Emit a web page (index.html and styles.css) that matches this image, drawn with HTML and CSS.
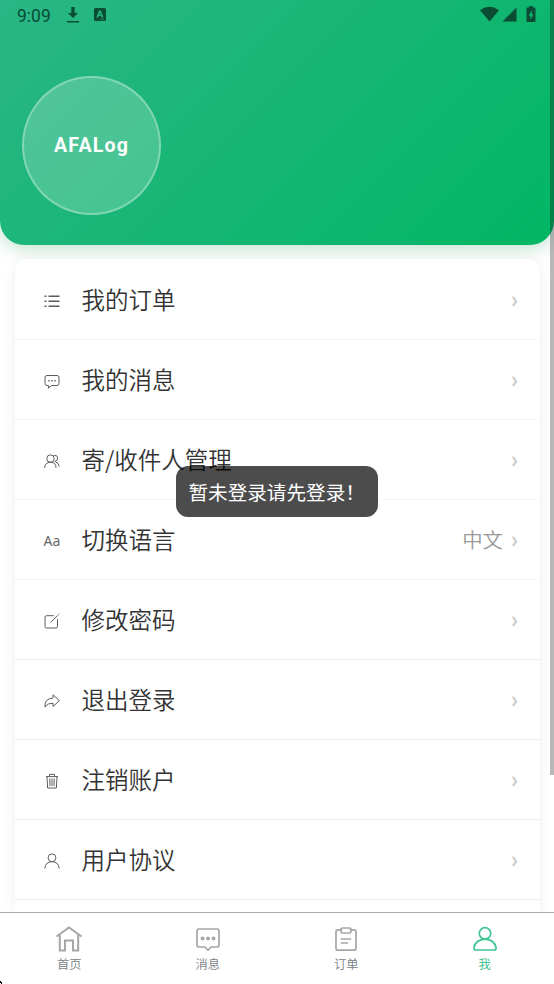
FILE: index.html
```html
<!DOCTYPE html>
<html lang="zh-CN">
<head>
<meta charset="utf-8">
<title>AFALog</title>
<link rel="stylesheet" href="styles.css">
</head>
<body>
<div class="screen">
  <header class="hero">
    <div class="status">
      <span class="time">9:09</span>
      <svg class="download" width="14" height="18" viewBox="0 0 14 18"><path d="M5.3 1h3.4v6H12l-5 5-5-5h3.300zM1 15h12v1.600H1z"/></svg>
      <svg class="app" width="12" height="13" viewBox="0 0 12 13"><path fill-rule="evenodd" d="M1.500 0h9Q12 0 12 1.500v10q0 1.500-1.500 1.500h-9Q0 13 0 11.500v-10Q0 0 1.500 0zM5 2.500 2.300 9.400h1.800l.5-1.400h2.500l.5 1.400h1.800L6.700 2.500zM5 6.700l.85-2.300.85 2.300zM6.300 10.800v.8h1.500v-.8zm2.200 0v.8H10v-.8z"/></svg>
      <svg class="signals" width="56" height="17" viewBox="0 0 56 17"><path d="M0 4.200Q9.500-2.600 19 4.200L9.600 15.500z"/><path d="M36.500 1.500v14H22.500z"/><path fill-rule="evenodd" d="M49 0h4v1.600h1.500Q55.500 1.600 55.500 2.600v12.400q0 1-1 1h-7q-1 0-1-1V2.600q0-1 1-1H49zM51.800 4.500 48.600 9.600h1.900v3.800l3-5.200h-1.700z"/></svg>
    </div>
    <div class="avatar">AFALog</div>
  </header>
  <main class="menu">
    <div class="row"><svg class="icon" viewBox="0 0 16 16"><path class="thick" d="M.5 3.200h2M4.500 3.200H15.500M.5 8.200h2M4.500 8.200H15.500M.5 13.200h2M4.500 13.200H15.500"/></svg><span class="label">我的订单</span><i class="arrow">›</i></div>
    <div class="row"><svg class="icon" viewBox="0 0 16 16"><path d="M3 2.500h10q2 0 2 2v6q0 2-2 2H7.700L4.500 15v-2.500H3q-2 0-2-2v-6q0-2 2-2z"/><path class="thick" d="M4.200 7.700h1.300M7.300 7.700h1.300M10.400 7.700h1.300"/></svg><span class="label">我的消息</span><i class="arrow">›</i></div>
    <div class="row"><svg class="icon" viewBox="0 0 16 16"><circle cx="6.500" cy="5.600" r="3.700"/><path d="M.6 14.800Q1 9.300 6.500 9.300T12 14.800M9.700 2.500q4-.7 4 2.500 0 2.600-2.800 3.500Q14.700 9.700 15.400 13.500"/></svg><span class="label">寄/收件人管理</span><i class="arrow">›</i></div>
    <div class="row"><span class="letters">Aa</span><span class="label">切换语言</span><span class="value">中文</span><i class="arrow">›</i></div>
    <div class="row strong"><svg class="icon" viewBox="0 0 16 16"><path d="M9.800 2.700H2.500Q1 2.700 1 4.200v9.300Q1 15 2.500 15H12q1.500 0 1.500-1.500V6.200M6.600 9.500l7.200-7.200M14.500 1.600l.9-.9"/></svg><span class="label">修改密码</span><i class="arrow">›</i></div>
    <div class="row strong"><svg class="icon" viewBox="0 0 16 16"><path d="M9 1.800l6.400 5.900L9 13.500V10.200Q4 9.800 .9 13.900.4 5.500 9 5z"/></svg><span class="label">退出登录</span><i class="arrow">›</i></div>
    <div class="row strong"><svg class="icon" viewBox="0 0 16 16"><path d="M2 3.600h12M5.500 3.500V1.300h5v2.200M3 3.800l.6 11.200h8.800L13 3.800M5.800 5.500l.2 7.500M8 5.500V13M10.200 5.500 10 13"/></svg><span class="label">注销账户</span><i class="arrow">›</i></div>
    <div class="row strong"><svg class="icon" viewBox="0 0 16 16"><circle cx="8" cy="4.800" r="3.900"/><path d="M.8 15.500Q1.500 8.700 8 8.700T15.200 15.500"/></svg><span class="label">用户协议</span><i class="arrow">›</i></div>
  </main>
  <nav class="tabs">
    <div class="tab"><svg viewBox="0 0 28 28"><path class="home" d="M1.500 11.500 14 2.500l12.500 9M4.800 9.500V25.500H10v-10h8v10h5.200V9.500"/></svg>首页</div>
    <div class="tab"><svg viewBox="0 0 28 28"><path d="M5 4h18q2 0 2 2v14q0 2-2 2h-5.800L14 25l-3.200-3H5q-2 0-2-2V6q0-2 2-2z"/><path class="dots" d="M8.500 13.400h.1M14 13.400h.1M19.500 13.400h.1"/></svg>消息</div>
    <div class="tab"><svg viewBox="0 0 28 28"><path d="M9.500 4.800H6Q4 4.800 4 6.800v16.400q0 2 2 2h16q2 0 2-2V6.800q0-2-2-2h-3.500M10.500 3h7q1.500 0 1.500 1.500v2q0 1.500-1.500 1.500h-7Q9 8 9 6.500v-2Q9 3 10.500 3zM9.500 14h9M9.500 18h6"/></svg>订单</div>
    <div class="tab active"><svg viewBox="0 0 28 28"><circle cx="14" cy="8.400" r="5.700"/><path d="M14 14.200Q4.500 14.700 3 22.500 2.700 25 5 25h18q2.300 0 2-2.500Q23.500 14.700 14 14.200z"/></svg>我</div>
  </nav>
  <div class="toast">暂未登录请先登录！</div>
  <div class="scrollbar"></div>
  <svg class="corner" width="3" height="4" viewBox="0 0 3 4"><path d="M0 1h1v1h1v2H1V3H0z"/></svg>
</div>
</body>
</html>
```
FILE: styles.css
```css
* { box-sizing: border-box; }

body {
  margin: 0;
  font-family: "Noto Sans CJK SC", sans-serif;
  background: #fff;
}

.screen {
  position: relative;
  display: flex;
  flex-direction: column;
  width: 554px;
  height: 984px;
  overflow: hidden;
}

.hero {
  flex: none;
  height: 245px;
  border-radius: 0 0 24px 24px;
  background: linear-gradient(135deg, #2ab686 0%, #02b663 100%);
  box-shadow: 0 4px 18px rgba(40, 150, 90, .28);
}

.status {
  display: flex;
  align-items: flex-start;
  height: 76px;
  padding: 6px 18px 0 17px;
  color: #0b4c34;
  fill: #0b4c34;
}

.time {
  width: 49px;
  font: 400 17.5px/20px Roboto, sans-serif;
}

.download { margin-right: 14px; }
.app { margin-top: 2px; }
.signals { margin-left: auto; }

.avatar {
  display: flex;
  align-items: center;
  justify-content: center;
  width: 139px;
  height: 139px;
  margin-left: 22px;
  border: 2.5px solid rgba(255, 255, 255, .3);
  border-radius: 50%;
  background: rgba(255, 255, 255, .2);
  color: #fff;
  font: 700 19.5px Roboto, sans-serif;
  letter-spacing: 1.2px;
}

.menu {
  flex: 1;
  min-height: 0;
  margin: 14px 14px 0 15px;
  padding-top: 1px;
  border-radius: 12px 12px 0 0;
  background: #fff;
  box-shadow: 0 2px 14px rgba(0, 0, 0, .07);
}

.row {
  display: flex;
  align-items: center;
  height: 80px;
  padding: 0 21px 0 28.500px;
  border-bottom: 1px solid #f6f6f6;
}

.strong { border-bottom-color: #eee; }

.icon {
  flex: none;
  width: 16px;
  height: 16px;
  margin: 2px 22px 0 0;
  fill: none;
  stroke: #5c5c5c;
  stroke-width: 1;
}

.icon .thick { stroke-width: 1.4; }

.letters {
  width: 38px;
  margin-top: 2px;
  font: 14px "Noto Sans", sans-serif;
  color: #666;
}

.label {
  flex: 1;
  margin-bottom: 2px;
  font-size: 23.5px;
  font-weight: 350;
  line-height: 34px;
  color: #333;
}

.value {
  margin-right: 8px;
  margin-bottom: 1px;
  font-size: 20.4px;
  font-weight: 350;
  color: #999;
}

.arrow {
  width: 8px;
  margin-top: 2px;
  font: 700 23px/28px Roboto, sans-serif;
  color: #ccc;
}

.tabs {
  display: flex;
  flex: none;
  height: 72px;
  border-top: 1px solid #aaa;
  background: #fff;
}

.tab {
  display: flex;
  flex: 1;
  flex-direction: column;
  align-items: center;
  padding-top: 12px;
  font-size: 12.3px;
  font-weight: 350;
  line-height: 18px;
  color: #7a7e83;
}

.tab svg {
  width: 28px;
  height: 28px;
  margin-bottom: 2px;
  fill: none;
  stroke: #a6a6a6;
  stroke-width: 1.7;
  stroke-linecap: round;
}

.tab .home { stroke-width: 2; stroke-linecap: butt; }
.tab .dots { stroke-width: 3.8; }
.active { color: #2abb80; }
.active svg { stroke: #40c593; }

.toast {
  position: absolute;
  top: 466px;
  left: 176px;
  width: 202px;
  height: 51px;
  padding-left: 12.500px;
  border-radius: 12px;
  background: rgba(0, 0, 0, .7);
  color: #fff;
  font-size: 19.6px;
  line-height: 52px;
  white-space: nowrap;
}

.scrollbar {
  position: absolute;
  top: 0;
  right: 0;
  width: 4px;
  height: 775px;
  background: rgba(0, 0, 0, .28);
}

.corner {
  position: absolute;
  bottom: 0;
  left: 0;
}
```
